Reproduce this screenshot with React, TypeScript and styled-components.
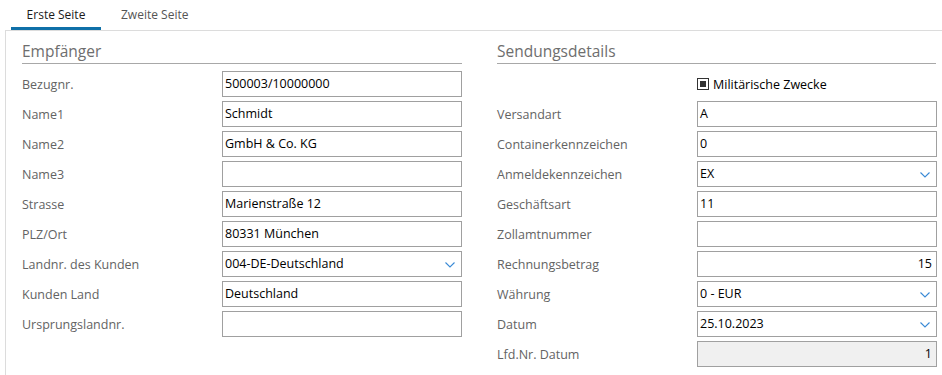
import React from "react";
import styled, { createGlobalStyle } from "styled-components";

const Global = createGlobalStyle`
  html, body { margin: 0; padding: 0; background: #ffffff; }
  body { font-family: "Open Sans", "Noto Sans", "Liberation Sans", sans-serif; color: #000; }
  * { box-sizing: border-box; }
`;

const Page = styled.div`
  width: 942px;
  height: 375px;
  overflow: hidden;
  background: #fff;
`;

const TabBar = styled.div`
  display: flex;
  height: 30px;
  padding-left: 11px;
  gap: 6px;
`;

const Tab = styled.div<{ $active?: boolean }>`
  display: flex;
  align-items: center;
  justify-content: center;
  height: 30px;
  padding: 2px 14px 0 14px;
  min-width: 90px;
  font-size: 12px;
  color: ${(p) => (p.$active ? "#1a1a1a" : "#555")};
  border-bottom: 3px solid ${(p) => (p.$active ? "#0f70a8" : "transparent")};
`;

const Panel = styled.div`
  margin-left: 5px;
  border-top: 1px solid #dcdcdc;
  border-left: 1px solid #dcdcdc;
  height: 345px;
  padding: 9px 0 0 16px;
  display: grid;
  grid-template-columns: 440px 439px;
  column-gap: 35px;
  align-items: start;
`;

const Section = styled.section`
  display: flex;
  flex-direction: column;
`;

const SectionTitle = styled.h2`
  margin: 0 0 7px 0;
  font-weight: 400;
  font-size: 15.5px;
  line-height: 22px;
  height: 24px;
  color: #6e6e6e;
  border-bottom: 1px solid #a8a8a8;
`;

const Rows = styled.div`
  display: flex;
  flex-direction: column;
  gap: 4px;
`;

const Row = styled.div`
  display: grid;
  grid-template-columns: 200px 240px;
  align-items: center;
  height: 26px;
`;

const Label = styled.span`
  font-size: 12.5px;
  color: #636363;
  padding-top: 1px;
`;

const Field = styled.div<{ $disabled?: boolean; $right?: boolean }>`
  position: relative;
  height: 26px;
  border: 1px solid #a0a0a0;
  background: ${(p) => (p.$disabled ? "#f0f0f0" : "#fff")};
  display: flex;
  align-items: center;
  justify-content: ${(p) => (p.$right ? "flex-end" : "flex-start")};
  padding: 0 4px 1px 2px;
  font-size: 12.5px;
  color: #000;
  white-space: nowrap;
`;

const Chevron = styled.svg`
  position: absolute;
  right: 6px;
  top: 10px;
`;

const CheckWrap = styled.div`
  display: flex;
  align-items: center;
  gap: 4px;
  font-size: 12.5px;
  color: #000;
`;

const CheckBox = styled.span`
  width: 12px;
  height: 12px;
  border: 1px solid #333;
  padding: 2px;
  display: inline-flex;
  &::after {
    content: "";
    flex: 1;
    background: #333;
  }
`;

type F = { label: string; value?: string; select?: boolean; right?: boolean; disabled?: boolean };

const left: F[] = [
  { label: "Bezugnr.", value: "500003/10000000" },
  { label: "Name1", value: "Schmidt" },
  { label: "Name2", value: "GmbH & Co. KG" },
  { label: "Name3", value: "" },
  { label: "Strasse", value: "Marienstraße 12" },
  { label: "PLZ/Ort", value: "80331 München" },
  { label: "Landnr. des Kunden", value: "004-DE-Deutschland", select: true },
  { label: "Kunden Land", value: "Deutschland" },
  { label: "Ursprungslandnr.", value: "" },
];

const right: F[] = [
  { label: "Versandart", value: "A" },
  { label: "Containerkennzeichen", value: "0" },
  { label: "Anmeldekennzeichen", value: "EX", select: true },
  { label: "Geschäftsart", value: "11" },
  { label: "Zollamtnummer", value: "" },
  { label: "Rechnungsbetrag", value: "15", right: true },
  { label: "Währung", value: "0 - EUR", select: true },
  { label: "Datum", value: "25.10.2023", select: true },
  { label: "Lfd.Nr. Datum", value: "1", right: true, disabled: true },
];

const FieldRow = ({ f }: { f: F }) => (
  <Row>
    <Label>{f.label}</Label>
    <Field $disabled={f.disabled} $right={f.right}>
      {f.value}
      {f.select && (
        <Chevron width="10" height="6" viewBox="0 0 10 6">
          <path d="M0.5 0.5 L5 5 L9.5 0.5" fill="none" stroke="#3a8ad6" strokeWidth="1.1" />
        </Chevron>
      )}
    </Field>
  </Row>
);

export default function App() {
  return (
    <Page>
      <Global />
      <TabBar>
        <Tab $active>Erste Seite</Tab>
        <Tab>Zweite Seite</Tab>
      </TabBar>
      <Panel>
        <Section>
          <SectionTitle>Empfänger</SectionTitle>
          <Rows>
            {left.map((f) => (
              <FieldRow key={f.label} f={f} />
            ))}
          </Rows>
        </Section>
        <Section>
          <SectionTitle>Sendungsdetails</SectionTitle>
          <Rows>
            <Row>
              <span />
              <CheckWrap>
                <CheckBox />
                Militärische Zwecke
              </CheckWrap>
            </Row>
            {right.map((f) => (
              <FieldRow key={f.label} f={f} />
            ))}
          </Rows>
        </Section>
      </Panel>
    </Page>
  );
}
